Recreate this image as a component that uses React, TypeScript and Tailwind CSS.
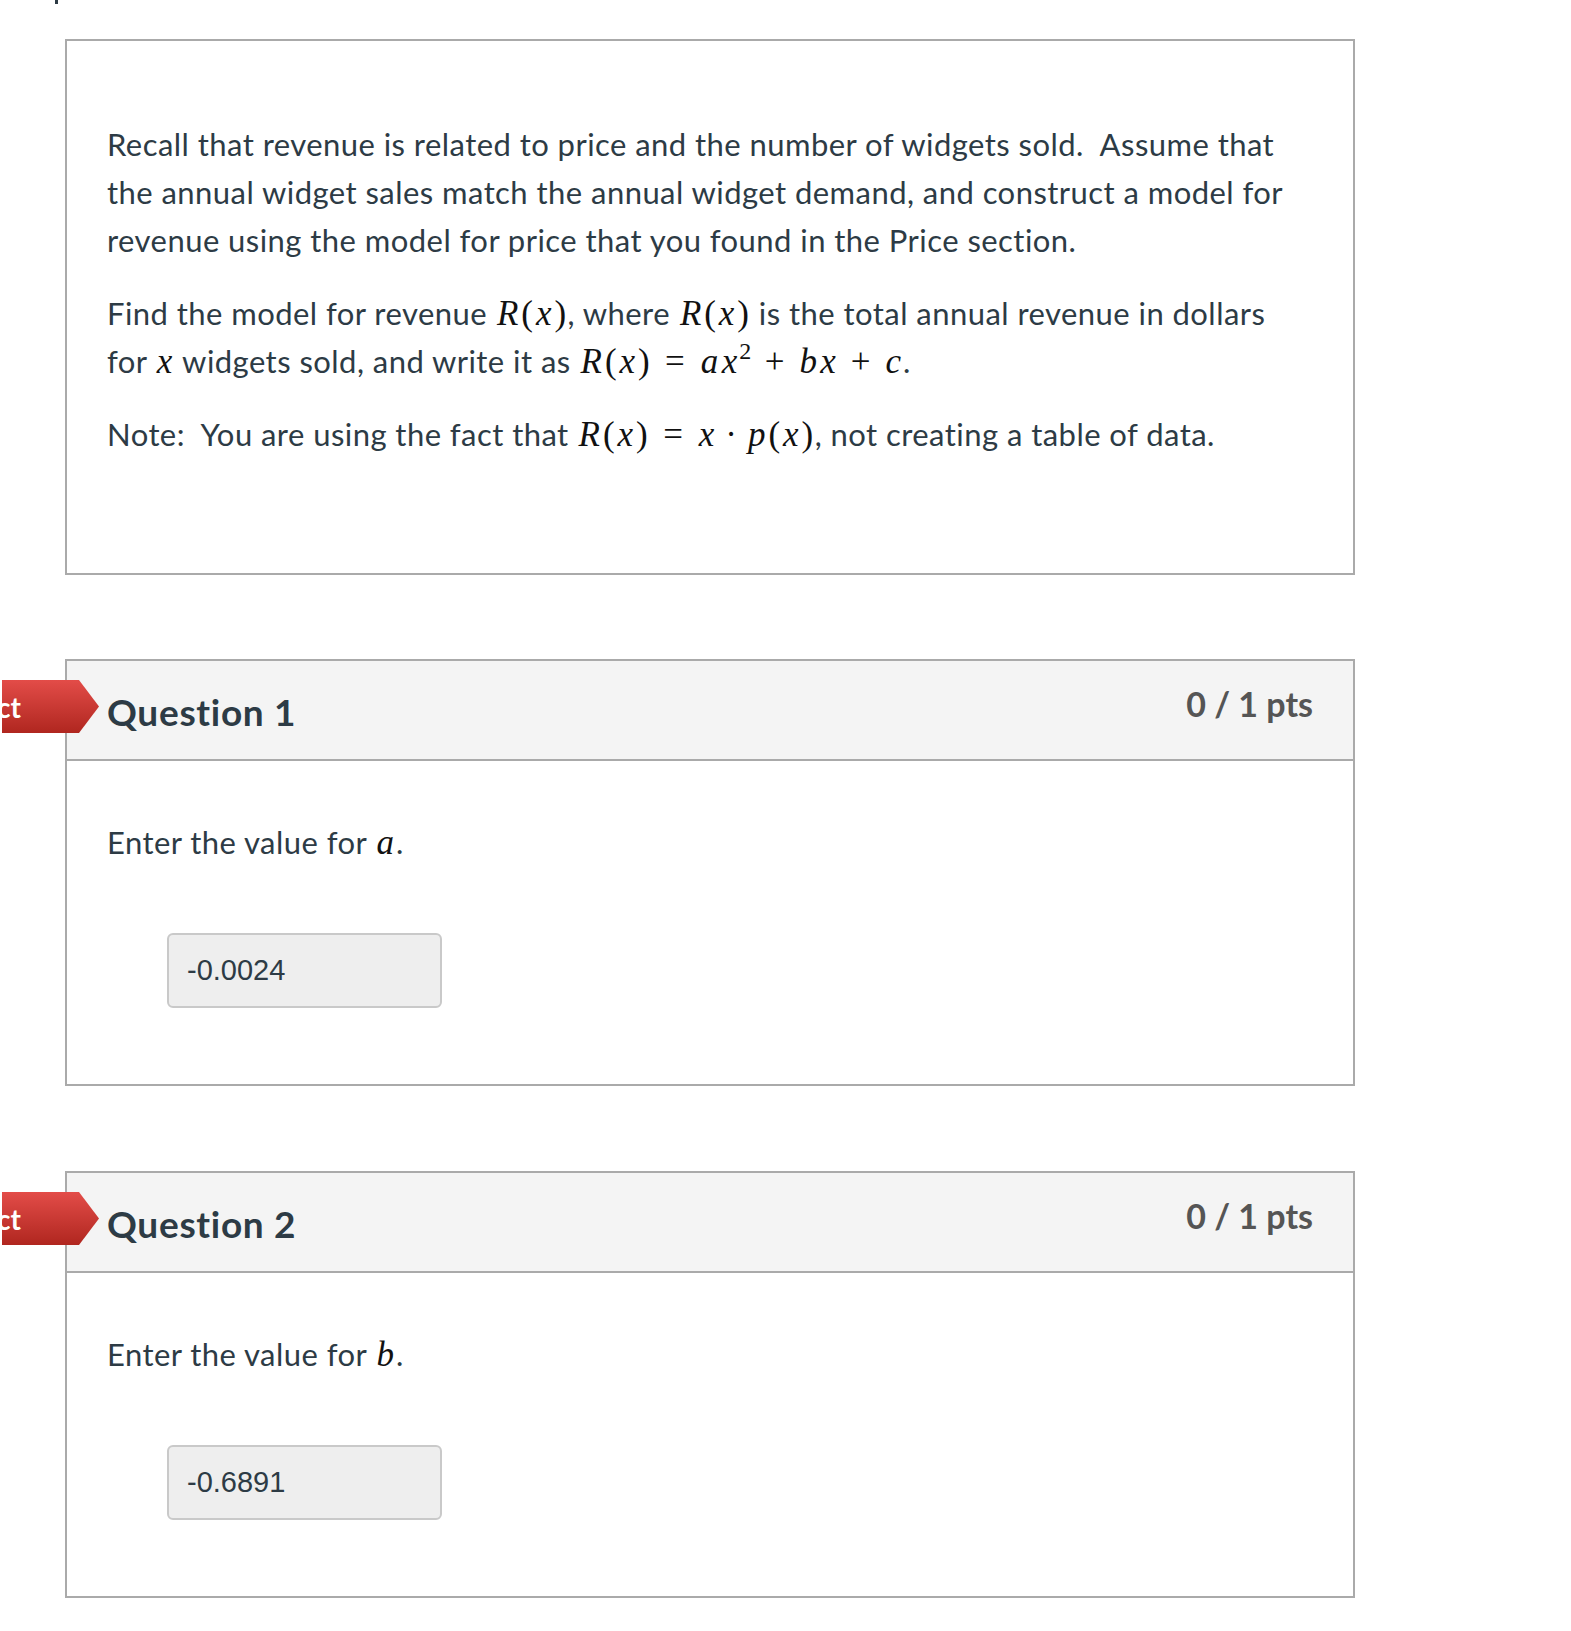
import React from "react";

// Inline math, drawn in a serif italic roughly like KaTeX output
function V({ children }: { children: React.ReactNode }) {
    return <i className="italic px-[1.5px]">{children}</i>;
}

function P({ children }: { children: React.ReactNode }) {
    return <span className="px-[1px]">{children}</span>;
}

function M({ children }: { children: React.ReactNode }) {
    return (
        <span className="font-['Liberation_Serif',serif] text-[35px] leading-none text-[#111] not-italic">
            {children}
        </span>
    );
}

function Rx() {
    return (
        <M>
            <V>R</V>
            <P>(</P>
            <V>x</V>
            <P>)</P>
        </M>
    );
}

function IncorrectTag() {
    return (
        <div
            className="absolute left-[-65px] top-[19px] h-[53px] w-[97px] bg-gradient-to-b from-[#e34c48] to-[#b0261f] z-10"
            style={{ clipPath: "polygon(0 0, 77px 0, 97px 50%, 77px 100%, 0 100%)" }}
        >
            <span className="absolute right-[78px] top-0 h-full flex items-center whitespace-nowrap text-white font-bold text-[28px]">
                Incorrect
            </span>
        </div>
    );
}

function Question({
    title,
    prompt,
    value,
}: {
    title: string;
    prompt: React.ReactNode;
    value: string;
}) {
    return (
        <div className="relative w-[1290px] border-2 border-[#aaaaaa]">
            <IncorrectTag />
            {/* header */}
            <div className="flex justify-between bg-[#f4f4f4] border-b-2 border-[#aaaaaa] h-[100px] px-[40px]">
                <h2 className="pt-[29px] text-[37px] leading-[44px] tracking-[0.7px] font-bold text-[#2d3b45]">{title}</h2>
                <div className="pt-[23px] text-[34px] leading-[40px] font-bold text-[#555555]">0 / 1 pts</div>
            </div>
            {/* body */}
            <div className="px-[40px] pt-[57px] pb-[76px]">
                <p className="text-[31px] leading-[48px] tracking-[0.45px] text-[#2d3b45]">{prompt}</p>
                <div className="ml-[60px] mt-[67px] w-[275px] h-[75px] rounded-[6px] border-2 border-[#c9c9c9] bg-[#eeeeee] flex items-center pl-[18px]">
                    <span className="font-['Liberation_Sans',Arial,sans-serif] text-[29px] text-[#2d3b45]">{value}</span>
                </div>
            </div>
        </div>
    );
}

export default function App() {
    return (
        <div className="min-h-[1631px] bg-white font-['Lato','Open_Sans',sans-serif] text-[#2d3b45] overflow-hidden">
            {/* bit of cut-off text above the viewport */}
            <div className="ml-[55px] h-[4px] w-[3px] bg-[#2d3b45]" />

            <div className="ml-[65px] mt-[35px] w-[1290px]">
                {/* intro / stimulus box */}
                <div className="border-2 border-[#aaaaaa] px-[40px] pt-[79px] pb-[90px] text-[31px] leading-[48px] tracking-[0.45px] text-[#2d3b45]">
                    <p className="mb-[25px]">
                        Recall that revenue is related to price and the number of widgets sold.&nbsp; Assume that the
                        annual widget sales match the annual widget demand, and construct a model for revenue using the
                        model for price that you found in the Price section.
                    </p>
                    <p className="mb-[25px]">
                        Find the model for revenue <Rx />, where <Rx /> is the total annual revenue in dollars for{" "}
                        <M>
                            <V>x</V>
                        </M>{" "}
                        widgets sold, and write it as{" "}
                        <M>
                            <V>R</V>
                            <P>(</P>
                            <V>x</V>
                            <P>)</P>
                            <span className="mx-[14px]">=</span>
                            <V>a</V>
                            <V>x</V>
                            <span className="relative -top-[14px] text-[24px] not-italic">2</span>
                            <span className="mx-[13px]">+</span>
                            <V>b</V>
                            <V>x</V>
                            <span className="mx-[13px]">+</span>
                            <V>c</V>
                        </M>
                        .
                    </p>
                    <p className="mb-[25px]">
                        Note:&nbsp; You are using the fact that{" "}
                        <M>
                            <V>R</V>
                            <P>(</P>
                            <V>x</V>
                            <P>)</P>
                            <span className="mx-[14px]">=</span>
                            <V>x</V>
                            <span className="mx-[9px]">·</span>
                            <V>p</V>
                            <P>(</P>
                            <V>x</V>
                            <P>)</P>
                        </M>
                        , not creating a table of data.
                    </p>
                </div>

                <div className="mt-[84px]">
                    <Question
                        title="Question 1"
                        value="-0.0024"
                        prompt={
                            <>
                                Enter the value for{" "}
                                <M>
                                    <V>a</V>
                                </M>
                                .
                            </>
                        }
                    />
                </div>

                <div className="mt-[85px]">
                    <Question
                        title="Question 2"
                        value="-0.6891"
                        prompt={
                            <>
                                Enter the value for{" "}
                                <M>
                                    <V>b</V>
                                </M>
                                .
                            </>
                        }
                    />
                </div>
            </div>
        </div>
    );
}
